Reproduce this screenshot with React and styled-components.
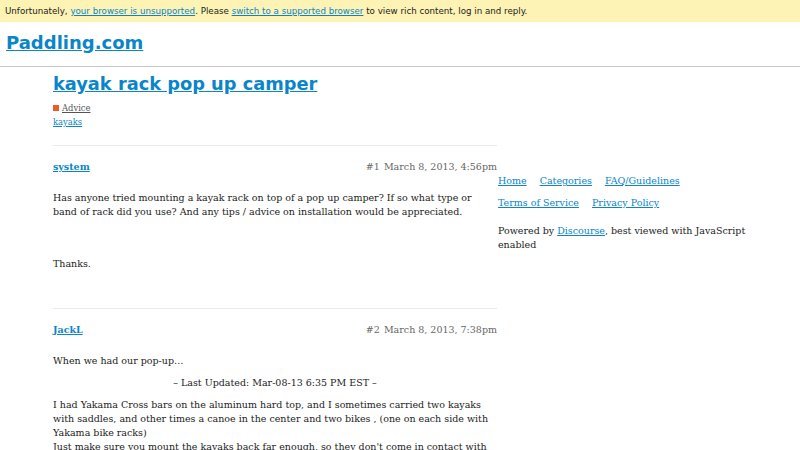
import React from 'react'
import styled, {createGlobalStyle} from 'styled-components'

const GlobalStyle = createGlobalStyle`
  html, body {
    margin: 0;
    padding: 0;
    background: #fff;
  }
  body {
    font-family: "DejaVu Serif", serif;
    font-size: 9.5px;
    color: #222;
  }
  a {
    color: #0a85c9;
  }
`

const Banner = styled.div`
  height: 22px;
  display: flex;
  align-items: center;
  padding: 0 5px;
  background: #fcf3b4;
  font-family: "DejaVu Sans", sans-serif;
  font-size: 8.7px;
  color: #222;
`

const Header = styled.header`
  height: 44px;
  display: flex;
  align-items: center;
  padding: 0 6px;
  border-bottom: 1px solid #c8c8c8;
`

const Logo = styled.a`
  font-family: "DejaVu Sans", sans-serif;
  font-weight: 700;
  font-size: 18px;
  color: #0a85c9;
  margin-top: -4px;
`

const Main = styled.main`
  padding: 0 53px;
`

const TopicTitle = styled.h1`
  margin: 5px 0 0;
  font-family: "DejaVu Sans", sans-serif;
  font-weight: 700;
  font-size: 17.8px;
  line-height: 24px;

  a { color: #0a85c9; }
`

const Meta = styled.div`
  margin-top: 6px;
  display: flex;
  flex-direction: column;
  gap: 2px;
  font-size: 8.4px;
  line-height: 12px;
`

const Category = styled.span`
  display: flex;
  align-items: center;
  gap: 3px;

  a { color: #555; }
`

const Swatch = styled.span`
  width: 6px;
  height: 6px;
  background: ${p => p.color};
`

const Layout = styled.div`
  display: flex;
  margin-top: 17px;
`

const Posts = styled.div`
  width: 444px;
  flex-shrink: 0;
`

const Post = styled.article`
  border-top: 1px solid #e9e9e9;
  padding-top: 14px;
  padding-bottom: 29px;
`

const PostHead = styled.div`
  display: flex;
  justify-content: space-between;
  align-items: baseline;
  line-height: 14px;
`

const Author = styled.a`
  font-weight: 700;
`

const Stamp = styled.span`
  color: #666;

  span { margin-right: 4px; }
`

const Body = styled.div`
  margin-top: 17px;
  line-height: 14px;

  p { margin: 0 0 8px; }
`

const Spacer = styled.div`
  height: ${p => p.h}px;
`

const Centered = styled.p`
  text-align: center;
`

const Sidebar = styled.aside`
  margin-top: 29px;
  padding-left: 1px;
  line-height: 14px;
`

const LinkRow = styled.div`
  display: flex;
  gap: 13px;
  margin-bottom: 8px;
`

const Powered = styled.p`
  margin: 14px 0 0;
  max-width: 252px;
`

export default function App() {
  return (
    <>
      <GlobalStyle/>
      <Banner>
        Unfortunately,&nbsp;<a href="#">your browser is unsupported</a>. Please&nbsp;
        <a href="#">switch to a supported browser</a>&nbsp;to view rich content, log in and reply.
      </Banner>
      <Header>
        <Logo href="#">Paddling.com</Logo>
      </Header>
      <Main>
        <TopicTitle><a href="#">kayak rack pop up camper</a></TopicTitle>
        <Meta>
          <Category><Swatch color="#f1592a"/><a href="#">Advice</a></Category>
          <span><a href="#">kayaks</a></span>
        </Meta>
        <Layout>
          <Posts>
            <Post>
              <PostHead>
                <Author href="#">system</Author>
                <Stamp><span>#1</span>March 8, 2013, 4:56pm</Stamp>
              </PostHead>
              <Body>
                <p>Has anyone tried mounting a kayak rack on top of a pop up camper? If so what type or band of rack did you use? And any tips / advice on installation would be appreciated.</p>
                <Spacer h={30}/>
                <p>Thanks.</p>
              </Body>
            </Post>
            <Post>
              <PostHead>
                <Author href="#">JackL</Author>
                <Stamp><span>#2</span>March 8, 2013, 7:38pm</Stamp>
              </PostHead>
              <Body>
                <p>When we had our pop-up…</p>
                <Centered>– Last Updated: Mar-08-13 6:35 PM EST –</Centered>
                <p>I had Yakama Cross bars on the aluminum hard top, and I sometimes carried two kayaks with saddles, and other times a canoe in the center and two bikes , (one on each side with Yakama bike racks)<br/>Just make sure you mount the kayaks back far enough, so they don't come in contact with the camper when you crank it up.</p>
              </Body>
            </Post>
          </Posts>
          <Sidebar>
            <LinkRow>
              <a href="#">Home</a>
              <a href="#">Categories</a>
              <a href="#">FAQ/Guidelines</a>
            </LinkRow>
            <LinkRow>
              <a href="#">Terms of Service</a>
              <a href="#">Privacy Policy</a>
            </LinkRow>
            <Powered>Powered by <a href="#">Discourse</a>, best viewed with JavaScript enabled</Powered>
          </Sidebar>
        </Layout>
      </Main>
    </>
  )
}
